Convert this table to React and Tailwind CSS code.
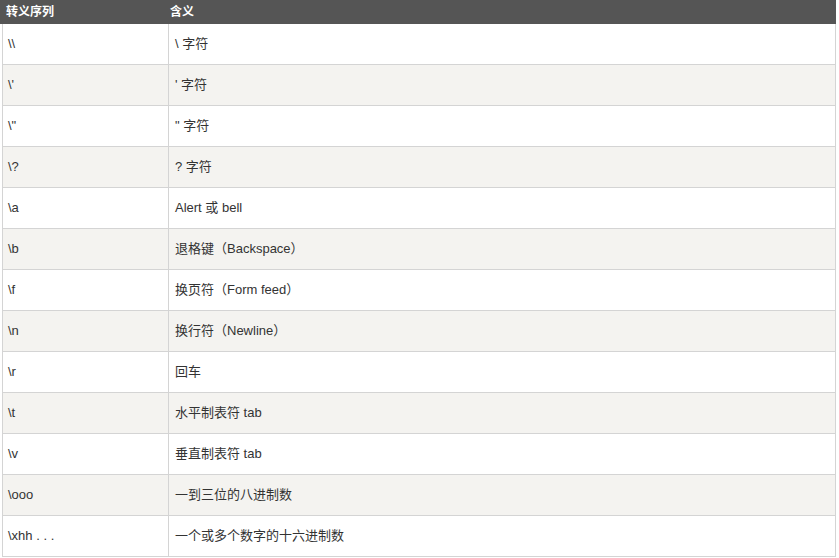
const rows = [
  ["\\\\", "\\ 字符"],
  ["\\'", "' 字符"],
  ['\\"', '" 字符'],
  ["\\?", "? 字符"],
  ["\\a", "Alert 或 bell"],
  ["\\b", "退格键（Backspace）"],
  ["\\f", "换页符（Form feed）"],
  ["\\n", "换行符（Newline）"],
  ["\\r", "回车"],
  ["\\t", "水平制表符 tab"],
  ["\\v", "垂直制表符 tab"],
  ["\\ooo", "一到三位的八进制数"],
  ["\\xhh . . .", "一个或多个数字的十六进制数"],
];

export default function App() {
  return (
    <div
      className="w-[839px] h-[558px] bg-white text-[13px] text-[#333]"
      style={{ fontFamily: '"Liberation Sans", Arial, "Noto Sans CJK SC", sans-serif' }}
    >
      <div className="flex h-[24px] w-[836px] bg-[#555] text-white font-bold text-[12px] items-center">
        <div className="w-[170px] pl-[6px]">转义序列</div>
        <div>含义</div>
      </div>
      <div className="ml-[2px] w-[834px] border-l border-r border-[#d4d4d4]">
        {rows.map((r, i) => (
          <div
            key={i}
            className={`flex h-[41px] border-b border-[#d4d4d4] ${i % 2 === 1 ? "bg-[#f4f3f0]" : "bg-white"}`}
          >
            <div className="w-[166px] border-r border-[#d4d4d4] pl-[5px] flex items-center">{r[0]}</div>
            <div className="flex-1 pl-[6px] flex items-center">{r[1]}</div>
          </div>
        ))}
      </div>
    </div>
  );
}
